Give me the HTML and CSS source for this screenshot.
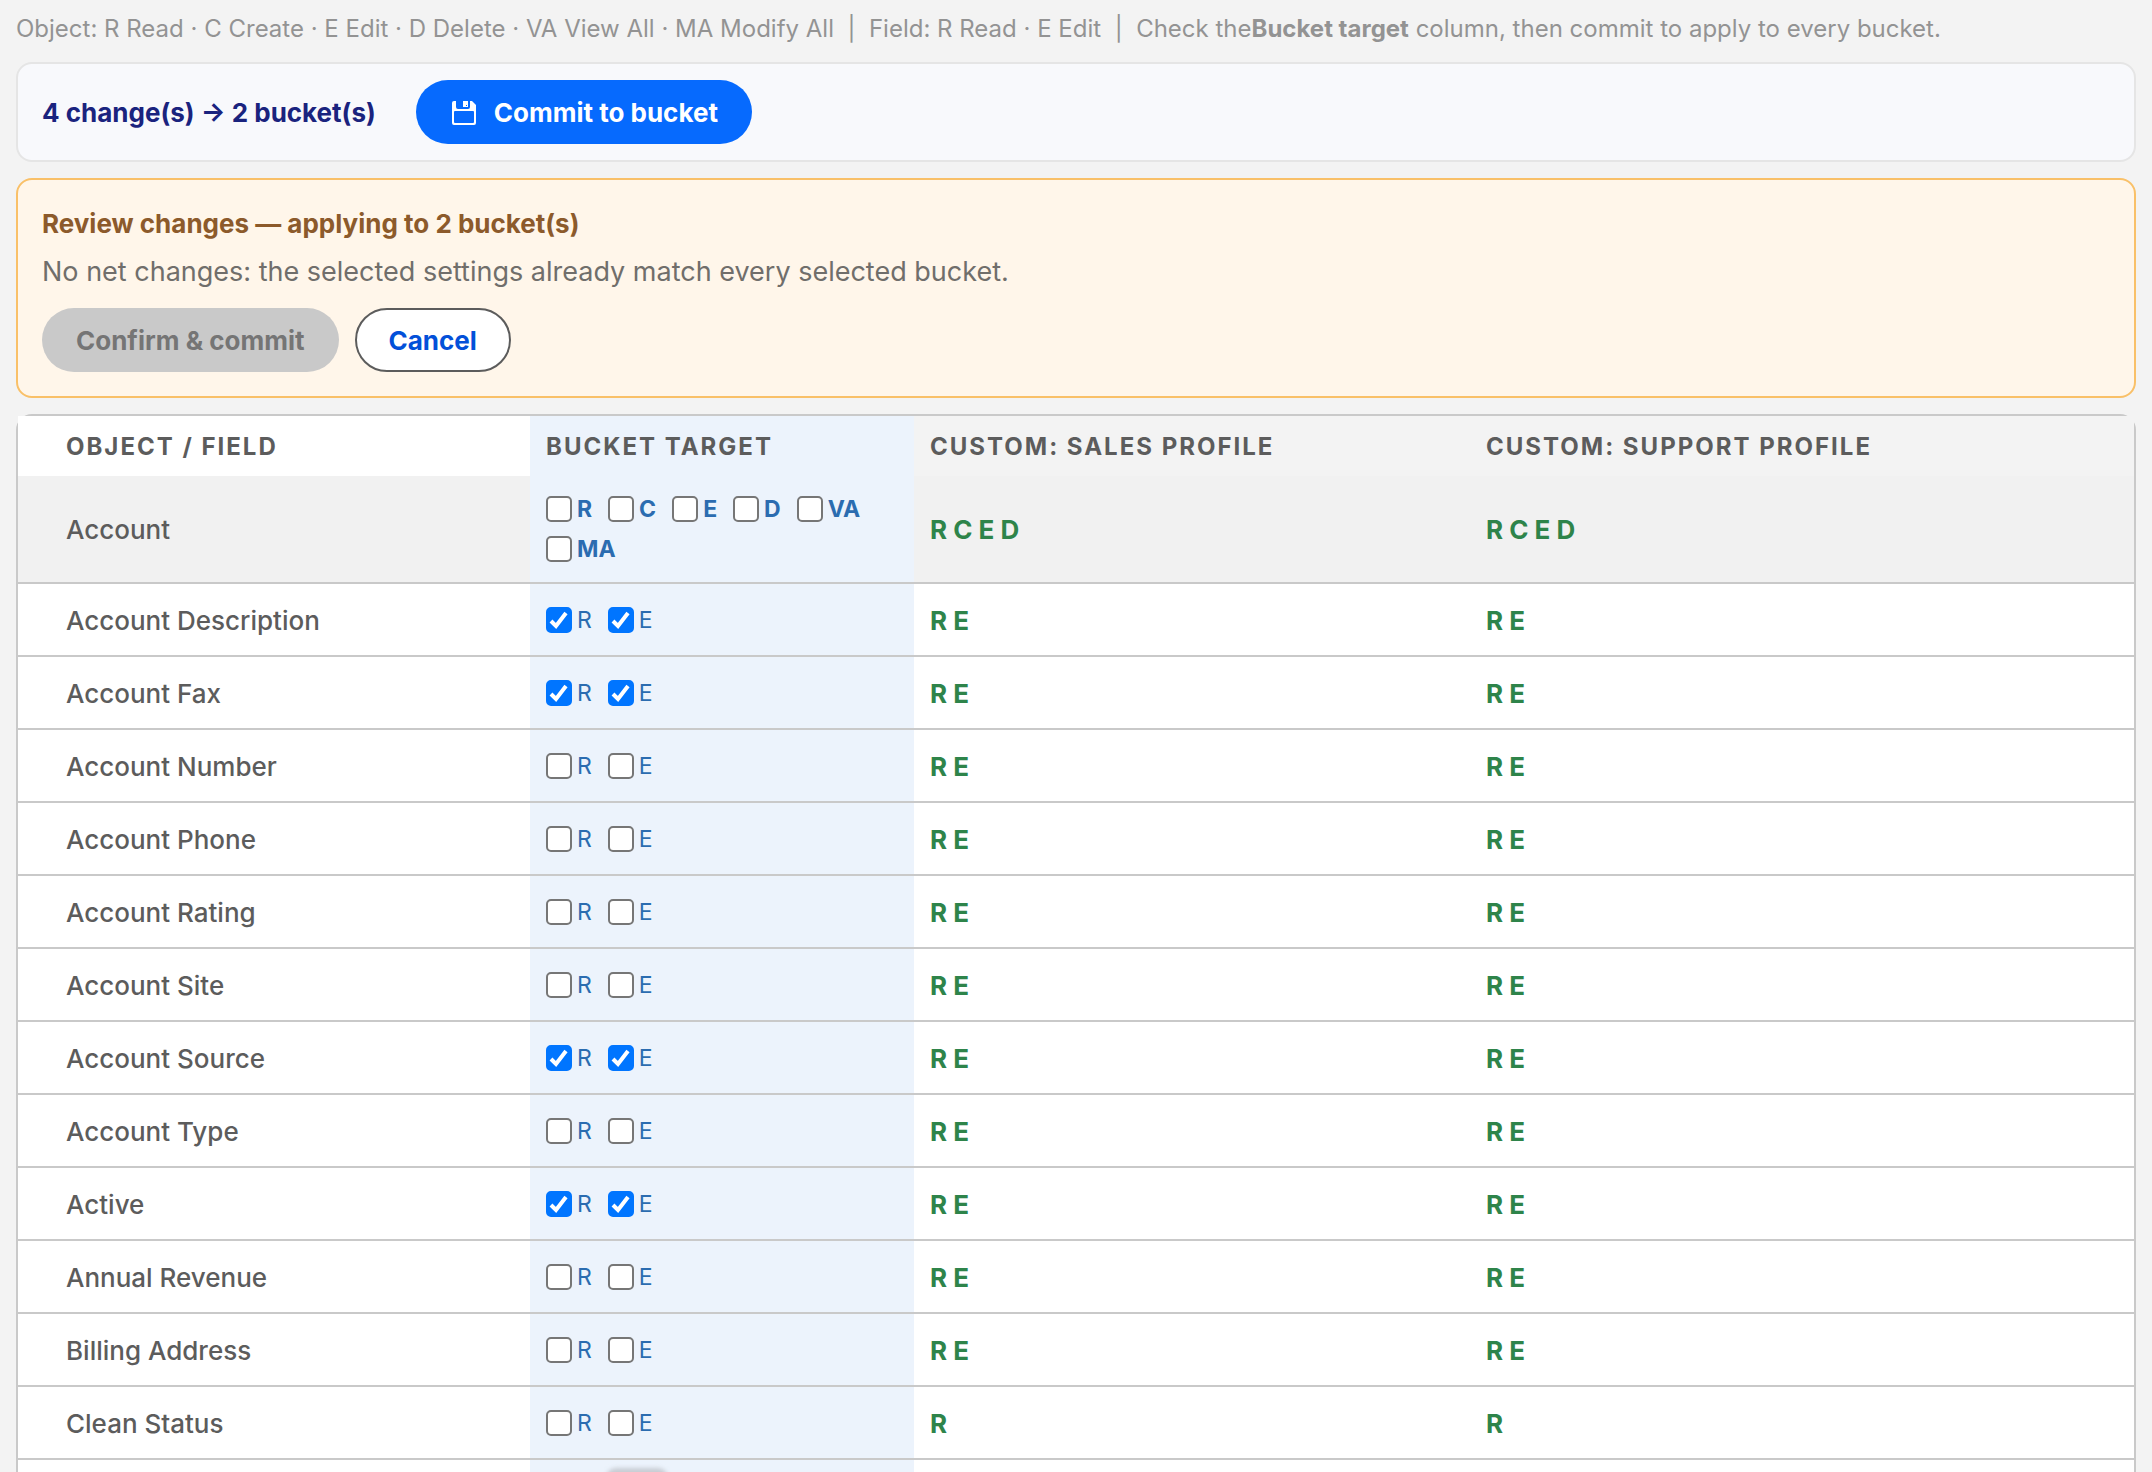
FILE: index.html
```html
<!DOCTYPE html>
<html lang="en">
<head>
<meta charset="utf-8">
<title>Bucket permissions</title>
<link rel="stylesheet" href="styles.css">
</head>
<body>
<main class="page">
  <p class="legend">Object: R Read · C Create · E Edit · D Delete · VA View All · MA Modify All &nbsp;|&nbsp; Field: R Read · E Edit &nbsp;|&nbsp; Check the<strong>Bucket target</strong> column, then commit to apply to every bucket.</p>
  <section class="panel toolbar">
    <span class="summary">4 change(s) → 2 bucket(s)</span>
    <button class="button button-primary" type="button">
      <svg class="icon" viewBox="-2 -2 28 28" aria-hidden="true"><path fill="#fff" fill-rule="evenodd" d="M0 2Q0 0 2 0H4V6Q4 8 6 8H16Q18 8 18 6V0H20L24 4V22Q24 24 22 24H2Q0 24 0 22ZM2 11Q2 10 3 10H21Q22 10 22 11V21Q22 22 21 22H3Q2 22 2 21Z"/><path fill="#fff" fill-rule="evenodd" d="M11 0H16V6H11ZM14 4V5H15V4Z"/></svg>
      Commit to bucket
    </button>
  </section>
  <section class="panel review">
    <h2 class="review-title">Review changes — applying to 2 bucket(s)</h2>
    <p class="review-text">No net changes: the selected settings already match every selected bucket.</p>
    <div class="actions">
      <button class="button button-disabled" type="button" disabled>Confirm &amp; commit</button>
      <button class="button button-outline" type="button">Cancel</button>
    </div>
  </section>
  <div class="table-frame">
    <table class="grid">
      <colgroup><col class="col-name"><col class="col-target"><col class="col-sales"><col class="col-support"></colgroup>
      <thead><tr><th scope="col">Object / Field</th><th scope="col">Bucket target</th><th scope="col">Custom: Sales Profile</th><th scope="col">Custom: Support Profile</th></tr></thead>
      <tbody id="rows"></tbody>
    </table>
  </div>
</main>
<script src="rows.js"></script>
</body>
</html>
```
FILE: styles.css
```css
* { box-sizing: border-box; }
body {
  margin: 0;
  height: 100vh;
  overflow: hidden;
  background: #f3f3f3;
  color: #5c5c5c;
  font-family: Inter, "Liberation Sans", sans-serif;
  font-size: 26px;
  line-height: 40px;
}
.page { display: flex; flex-direction: column; gap: 16px; padding: 12px 16px 0; }
.legend { margin: 0; color: #939393; font-size: 24px; line-height: 34px; white-space: nowrap; }
.panel { border: 2px solid #e5e5e5; border-radius: 16px; padding: 16px 24px; }
.toolbar { display: flex; align-items: center; gap: 40px; background: #f8f9fc; }
.summary { padding-top: 2px; color: #1a237e; font-weight: 700; }
.button {
  display: inline-flex;
  align-items: center;
  height: 64px;
  padding: 2px 32px 0;
  border: 2px solid transparent;
  border-radius: 32px;
  font: inherit;
  font-weight: 700;
}
.button-primary { gap: 16px; background: #066afe; color: #fff; }
.icon { width: 28px; height: 28px; }
.button-disabled { background: #c9c9c9; color: #757575; }
.button-outline { border-color: #5c5c5c; background: #fff; color: #0250d9; }
.review { padding: 24px; border-color: #f9c068; background: #fff6ea; }
.review-title { margin: 0; color: #8c5a2b; font-size: 26px; font-weight: 700; }
.review-text { margin: 8px 0 16px; color: #706e6b; font-size: 27px; }
.actions { display: flex; gap: 16px; }
.table-frame { border: 2px solid #c9c9c9; border-radius: 16px; }
.grid { width: 100%; border-collapse: separate; border-spacing: 0; table-layout: fixed; background: #fff; }
.col-name { width: 512px; }
.col-target { width: 384px; }
.col-sales { width: 556px; }
.grid th, .grid td { padding: 2px 16px 0; text-align: left; }
.grid th:first-child, .grid td:first-child { padding-left: 48px; }
.grid th {
  height: 60px;
  background: #f3f3f3;
  font-size: 24px;
  font-weight: 700;
  letter-spacing: 2px;
  text-transform: uppercase;
}
.grid th:first-child { background: #fff; }
.grid td { height: 73px; border-bottom: 2px solid #c9c9c9; font-weight: 500; }
.grid td:nth-child(2) { position: relative; padding-top: 0; }
.grid .object td { height: 108px; background: #f1f1f1; }
.grid th:nth-child(2), .grid td:nth-child(2), .grid .object td:nth-child(2) { background: #ecf3fc; }
.grid .perms { color: #2e844a; font-weight: 700; }
.checks { display: flex; flex-wrap: wrap; gap: 4px 16px; }
.check { display: flex; align-items: center; gap: 5px; color: #2b6cb0; font-size: 23px; font-weight: 400; line-height: 36px; }
.object .check { font-weight: 700; }
.check input {
  appearance: none;
  width: 26px;
  height: 26px;
  margin: 0;
  border: 2px solid #767676;
  border-radius: 5px;
  background: #fff;
}
.check input:checked {
  border-color: #0075ff;
  background: #0075ff url("data:image/svg+xml,%3Csvg xmlns='http://www.w3.org/2000/svg' viewBox='0 0 22 22'%3E%3Cpath d='M3 12L8 17L18 4' fill='none' stroke='white' stroke-width='4'/%3E%3C/svg%3E") center / 22px 22px;
}
.float-shadow {
  position: absolute;
  top: 8px;
  left: 76px;
  width: 62px;
  height: 40px;
  border-radius: 10px;
  background: #c8ccd3;
  filter: blur(2px);
}
```
FILE: rows.js
```js
const rows = [
  ["Account", "RCED"], ["Account Description", "RE", true], ["Account Fax", "RE", true],
  ["Account Number", "RE"], ["Account Phone", "RE"], ["Account Rating", "RE"],
  ["Account Site", "RE"], ["Account Source", "RE", true], ["Account Type", "RE"],
  ["Active", "RE", true], ["Annual Revenue", "RE"], ["Billing Address", "RE"],
  ["Clean Status", "R"], ["", ""]
];
document.getElementById("rows").innerHTML = rows.map(([name, perms, on], i) => {
  const keys = !name ? [] : i === 0 ? ["R", "C", "E", "D", "VA", "MA"] : ["R", "E"];
  const checks = keys.map(k => `<label class="check"><input type="checkbox"${on ? " checked" : ""}>${k}</label>`).join("");
  const granted = [...perms].join(" ");
  const shadow = name ? "" : `<span class="float-shadow"></span>`;
  return `<tr class="${i === 0 ? "object" : "field"}"><td>${name}</td><td><div class="checks">${checks}</div>${shadow}</td><td class="perms">${granted}</td><td class="perms">${granted}</td></tr>`;
}).join("");
```
